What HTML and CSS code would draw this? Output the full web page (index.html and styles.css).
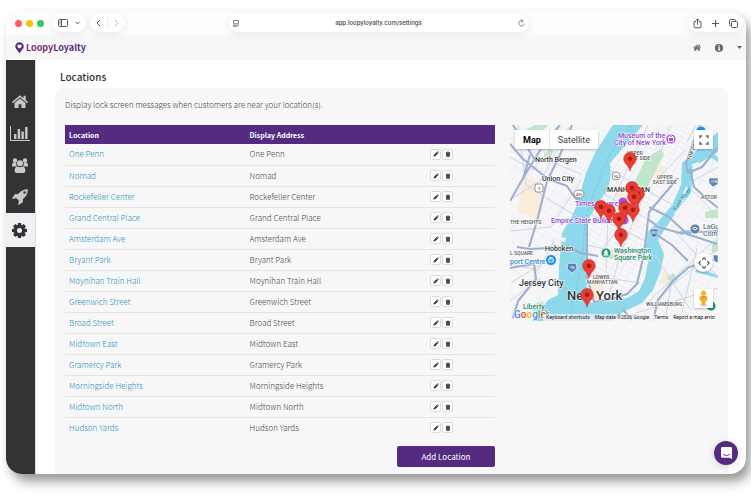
FILE: index.html
```html
<!DOCTYPE html>
<html lang="en">
<head>
<meta charset="utf-8">
<title>Locations</title>
<link rel="stylesheet" href="styles.css">
</head>
<body>
<svg class="sprite" aria-hidden="true">
  <symbol id="home" viewBox="0 0 16 13"><path d="M8 .3 0 7l.9 1.2L8 2.3l7.100 5.900L16 7l-2.300-1.900V.8h-2.200v2.500zM8 3.400 2.500 8v5h4.100V9.300h2.800V13h4.100V8z"/></symbol>
  <symbol id="pencil" viewBox="0 0 8 8"><path d="M1 5.200 5 1.200 6.800 3l-4 4L.8 7.200zM5.500.8l.5-.4q.4-.3.800.1l.8.8q.3.400 0 .8l-.4.500z"/></symbol>
  <symbol id="trash" viewBox="0 0 8 8"><path d="M1 1.400h1.800L3.200.5h1.600l.4.900H7v1H1zM1.500 2.800h5v4q0 .8-.8.800H2.300q-.8 0-.8-.8z"/><path d="M3 3.600v3M4 3.600v3M5 3.600v3" stroke="#999" stroke-width=".4"/></symbol>
  <symbol id="pin" viewBox="0 0 14 20"><path d="M7 .5a6.300 6.300 0 0 1 6.300 6.300c0 4.700-4.900 5.700-6.300 12.200C5.600 12.500.7 11.500.7 6.800A6.300 6.300 0 0 1 7 .5z" fill="#ea3d33" stroke="#c92a22" stroke-width=".6"/><circle cx="7" cy="6.800" r="2.300" fill="#a61c17"/></symbol>
</svg>

<div class="window">
  <div class="toolbar">
    <div class="tools-left">
      <span class="lights"><i class="red"></i><i class="yellow"></i><i class="green"></i></span>
      <span class="pill">
        <button aria-label="Sidebar"><svg width="10" height="8" viewBox="0 0 10 8" class="line"><rect x=".5" y=".5" width="9" height="7" rx="1"/><path d="M3.500.5v7M1.500 2h1M1.500 3.500h1M1.500 5h1"/></svg></button>
        <button aria-label="Tab groups"><svg width="5" height="4" viewBox="0 0 5 4" class="line"><path d="m.5.8 2 2 2-2"/></svg></button>
      </span>
      <span class="pill arrows">
        <button aria-label="Back"><svg width="5" height="8" viewBox="0 0 5 8" class="line"><path d="M4.200.8 1 4l3.200 3.200"/></svg></button>
        <i class="divider"></i>
        <button aria-label="Forward" class="faded"><svg width="5" height="8" viewBox="0 0 5 8" class="line"><path d="M.8.8 4 4 .8 7.200"/></svg></button>
      </span>
    </div>
    <div class="address">
      <svg width="6" height="7" viewBox="0 0 6 7" class="line"><path d="M.5.500h5v3.300h-5zM0 5.200h6M0 6.600h4"/></svg>
      <span>app.loopyloyalty.com/settings</span>
      <button aria-label="Reload"><svg width="7" height="8" viewBox="0 0 7 8" class="line"><path d="M5.200 2.200A2.700 2.700 0 1 0 6.200 4.500M3.200.3l2 1.900-2 1.500"/></svg></button>
    </div>
    <div class="tools-right">
      <span class="pill">
        <button aria-label="Share"><svg width="9" height="11" viewBox="0 0 9 11" class="line"><path d="M3 3.500H1.700Q1 3.500 1 4.300v4.500q0 1 1 1h5q1 0 1-1V4.300q0-.8-.8-.8H6M4.500 6.800V1M2.800 2.600 4.500.9l1.700 1.700"/></svg></button>
        <button aria-label="New tab"><svg width="7" height="7" viewBox="0 0 7 7" class="line"><path d="M3.500 0v7M0 3.500h7"/></svg></button>
        <button aria-label="Tab overview"><svg width="9" height="9" viewBox="0 0 9 9" class="line"><rect x="2.500" y="2.500" width="6" height="6" rx="1"/><path d="M2.500 6.500h-1q-1 0-1-1v-4q0-1 1-1h4q1 0 1 1v1"/></svg></button>
      </span>
    </div>
  </div>

  <header class="header">
    <a class="logo" href="#"><svg width="9" height="12" viewBox="0 0 9 12"><path d="M4.500.3a4.200 4.200 0 0 1 4.200 4.200c0 2.300-1.700 3.200-2.500 4.400L4.500 11.300 2.800 8.900C2 7.700.3 6.800.3 4.500A4.200 4.200 0 0 1 4.500.3z" fill="#542b80"/><path d="M4.500 6.600C2.500 5.300 2.400 4.500 2.400 3.800q.1-1.200 1.200-1.200.6 0 .9.600.3-.6.900-.6 1.100 0 1.200 1.200c0 .7-.1 1.500-2.100 2.800z" fill="#fff"/></svg><span class="loopy">Loopy</span><span>Loyalty</span></a>
    <nav class="header-nav">
      <a href="#" aria-label="Home"><svg width="8" height="7"><use href="#home"/></svg></a>
      <a href="#" aria-label="Information"><svg width="8" height="8" viewBox="0 0 8 8"><circle cx="4" cy="4" r="4"/><path d="M3.300 1.300h1.500v1.100H3.300zM2.900 3.200h2v2.500h.6v.8H2.800v-.8h.6V4h-.5z" fill="#f7f7f7"/></svg></a>
      <a href="#" aria-label="Account menu"><svg width="5" height="3" viewBox="0 0 5 3"><path d="M0 0h5L2.500 3z"/></svg></a>
    </nav>
  </header>

  <div class="body">
    <nav class="sidebar">
      <a href="#" aria-label="Home"><svg width="16" height="13"><use href="#home"/></svg></a>
      <a href="#" aria-label="Statistics"><svg width="20" height="15" viewBox="0 0 20 15"><path d="M0 0h1v14h19v1H0zM4 8h2.400v5H4zM7.700 3h2.400v10H7.700zM11.400 5.500h2.400V13h-2.400zM15.100 1h2.400v12h-2.400z"/></svg></a>
      <a href="#" aria-label="Customers"><svg width="16" height="15" viewBox="0 0 16 15"><circle cx="3" cy="2.500" r="2.200"/><circle cx="13" cy="2.500" r="2.200"/><path d="M0 8.500V7q0-2.400 2-2.400h2.300q-.6 2.200 1 3.900zM16 8.500V7q0-2.400-2-2.400h-2.300q.6 2.200-1 3.900z"/><circle cx="8" cy="5.300" r="3"/><path d="M2.600 13q0-4.300 2.900-4.600 2.500 1.600 5 0 2.900.3 2.900 4.600 0 2-2.200 2H4.800q-2.200 0-2.200-2z"/></svg></a>
      <a href="#" aria-label="Campaigns"><svg width="16" height="16" viewBox="0 0 16 16"><path fill-rule="evenodd" d="M15.800.2q.3 5-3.500 8.500l-1.300 1.200-.2 3.300-4.300 2.700-.4-.4.900-3.500-2.800-2.900L.5 10l-.4-.4 2.700-4.300 3.300-.2L7.300 3.800Q10.800 0 15.800.2zM12.500 2.200a1.300 1.300 0 1 0 .1 2.600 1.300 1.300 0 0 0-.1-2.600z"/></svg></a>
      <a href="#" aria-label="Settings" class="current"><svg width="15" height="15" viewBox="-8 -8 16 16"><g id="teeth"><path d="M-1.700-8h3.400l.6 4h-4.600zM-1.700 8h3.400l.6-4h-4.600zM-8-1.700v3.400l4 .6v-4.600zM8-1.700v3.400l-4 .6v-4.600z"/></g><use href="#teeth" transform="rotate(45)"/><circle r="4.300" fill="none" stroke="#333" stroke-width="3.200"/></svg></a>
    </nav>

    <main class="main">
      <h1>Locations</h1>
      <section class="panel">
        <p class="intro">Display lock screen messages when customers are near your location(s).</p>
        <div class="columns">
          <div class="list">
            <table>
              <thead><tr><th class="name">Location</th><th class="place">Display Address</th><th aria-label="Actions"></th></tr></thead>
              <tbody id="rows"></tbody>
            </table>
            <button class="add">Add Location</button>
          </div>

          <div class="map">
            <svg class="canvas" viewBox="510 125 208 196" role="img" aria-label="Map of New York locations">
              <defs>
                <pattern id="streets" width="9" height="5" patternUnits="userSpaceOnUse" patternTransform="rotate(28)"><path d="M0 0h9M0 0v5" stroke="#dee1e9" stroke-width=".8" fill="none"/></pattern>
                <pattern id="blocks" width="15" height="11" patternUnits="userSpaceOnUse" patternTransform="rotate(32)"><path d="M0 0h15M0 0v11" stroke="#dfe3eb" stroke-width=".8" fill="none"/></pattern>
              </defs>
              <rect x="510" y="125" width="208" height="196" fill="#f6f6f8"/>
              <rect x="510" y="125" width="208" height="196" fill="url(#blocks)"/>
              <path d="M643 125 610 163 608 190 588 220 586 300 610 309 640 290 650 235 690 180 692 155 715 125z" fill="#f7f7f9"/>
              <path d="M643 125 610 163 608 190 588 220 586 300 610 309 640 290 650 235 690 180 692 155 715 125z" fill="url(#streets)"/>
              <g fill="#f8edda"><path d="M522 175l17 8 4 22-8 14-17-8z"/><path d="M593 272l13 4-5 23-12 2z"/><path d="M615 195l15-12 14 10-16 18z"/><path d="M657 163l8 4-6 13-8-4zM663 272l12 6-6 8-10-4z"/></g>
              <g fill="#bfe8cb"><path d="M526 129l10-4h12l-12 13zM544 156l5-8 5 3-5 9zM560 134l9-5 5 4-8 7z"/><path d="M646 158l15-9 3 6-20 38-12-6z"/><path d="M666 278l7-5 5 6-4 5zM705 212l13-3v9h-13zM530 306l12-5 5 8-11 6z"/><path d="M712 244l6-5v12l-6 2zM607 256l5-4 3 5-4 3z"/></g>
              <g fill="#8ed8ec">
                <path d="M613 125h30l-33 38q2 15-3 28l-10 13-9 17-1 22-2 23 2 20 4 17 22-2 14-3 12-7 6-13 4-21-4-14 2-11 10-9 15-18 9-20 1-22 9-8 27-23v20l-18 11-7 10-2 20-14 18-14 21-5 8 6 14-3 16-8 20-11 13-19 9-12 9h-79l16-21 10-5 1-28 3-34 8-13 7-15 9-32 9-20z"/>
                <path d="M697 268l21 7v3l-23-6zM680 231l17-2-2 4-15 2zM705 147l13 10v5l-15-9z"/>
              </g>
              <path d="M675 214l10-17M684 194l3-7M693 165l5-2 2 5-5 4z" fill="#f4f4f6" stroke="#f4f4f6" stroke-width="2"/>
              <g fill="#f4f4f6"><path d="M549 235l17 3-1 4-16-2zM546 249l14 2v4l-15-1zM544 267l14 1v5l-14-1z"/></g>
              <g fill="none" stroke="#cdd4e3" stroke-width="1"><path d="M510 157l23 13 31-38M518 125l8 60 50 31M510 200l31-20 28-53M510 231l41-4 31-48M512 282l46-28M510 264l28 6 17-31M510 301l31-23M535 125l12 35 34 14M648 125l-19 40-21 47-2 61M671 125l-31 80-20 50-12 45M685 150l-49 52-31 45M610 170l67 37M602 193l65 37M592 215l58 28M588 245l57 14M587 275l53 8M718 167l-29 16M675 232l43 45M648 302l70-65M665 321l6-35 44-35M636 313l82-25M655 255l35 54M697 248l-17 73M692 190l26 27M696 125l-9 17"/></g>
              <g fill="none" stroke="#9fafd0" stroke-width="2.100" stroke-linejoin="round"><path d="M510 144l13 15 25 20 19 7 8 12 32 15M510 201l16-28 18-29 16-19M535 160l-22-35M523 179l7-24M517 247l13 2 38-2 13 6 17 3"/><path d="M513 318l5-17 18-22-2-15-24 4M572 125l-12 30-13 26-10 40-8 26"/><path d="M700 125l-8 21-6 17 2 10 14-6 16-20M690 169l4 18 12 11 12 10M649 207l20 10 18 17 30 10M648 219l10 8 22 6 38-2M587 220v57l7 25 18-3 15-5 10-10 7-30 5-42 29-34"/><path d="M653 321l5-21 15-19 16-14 18-5 11-3M654 233l18 12 16 16M632 321l-9-12"/></g>
              <path d="M632 125l-23 31-14 34-10 30-3 43-12 53" fill="none" stroke="#5fc2df" stroke-width=".7" stroke-dasharray="3 2"/>
              <g class="shield"><ellipse cx="579" cy="194" rx="5" ry="4"/><circle cx="616" cy="176" r="4"/><rect x="535" y="184" width="8" height="8" rx="2"/></g>
              <g class="route"><text x="579" y="196">495</text><text x="616" y="178">9A</text><text x="539" y="190">9</text></g>
              <g fill="#5d7fb9" stroke="#fff" stroke-width=".6"><path d="M568 263q4 1 8 0l1 6-5 4-5-4zM650 229h8v5l-4 4-4-4zM709 178h9v6l-5 3-4-4zM713 255h5v8l-4-2z"/></g>
              <g class="route light"><text x="572" y="269">78</text><text x="654" y="234">495</text><text x="714" y="183">278</text></g>
              <g class="city"><text x="535" y="162">North Bergen</text><text x="542" y="181">Union City</text><text x="545" y="251">Hoboken</text><text x="607" y="192">MANHATTAN</text><text x="519" y="286" class="large">Jersey City</text><text x="567" y="300" class="huge">New York</text></g>
              <g class="area"><text x="510" y="224">THE HEIGHTS</text><text x="510" y="255">L SQUARE</text><text x="627" y="155">UPPER</text><text x="625" y="160">WEST SIDE</text><text x="657" y="179">UPPER</text><text x="653" y="184">EAST SIDE</text><text x="701" y="199">ASTOR</text><text x="593" y="279">LOWER</text><text x="587" y="284">MANHATTAN</text><text x="646" y="306">WILLIAMSBURG</text></g>
              <g class="poi violet"><text x="618" y="138">Museum of the</text><text x="614" y="145">City of New York</text><text x="575" y="206">Times Square</text><text x="551" y="223">Empire State Building</text></g>
              <g class="poi green"><text x="614" y="253">Washington</text><text x="614" y="260">Square Park</text><text x="523" y="309">Liberty</text><text x="543" y="316">rk</text></g>
              <g class="poi slate"><text x="703" y="229">LaGu</text><text x="703" y="236">Com</text></g>
              <text x="510" y="264" class="poi blue">port Centre</text>
              <text x="0" y="0" class="river" transform="translate(676 211) rotate(-55)">East River</text>
              <text x="0" y="0" class="area" transform="translate(690 160) rotate(-66)">FDR DR</text>
              <g stroke="#fff" stroke-width=".8"><circle cx="671" cy="139" r="5" fill="#a653dc"/><circle cx="623" cy="202" r="5" fill="#a653dc"/><circle cx="624" cy="220" r="5" fill="#a653dc"/><circle cx="551" cy="260" r="5.500" fill="#1b8fe8"/><circle cx="606" cy="253" r="5" fill="#159b70"/><circle cx="695" cy="229" r="5" fill="#67819b"/><circle cx="711" cy="306" r="5" fill="#159b70"/><circle cx="701" cy="131" r="5" fill="#1b8fe8"/></g>
              <path d="M668 137.500 671 135.500l3 2zM668.500 138v3.500h5V138M548.800 259h4.400v3h-4.400zM549.800 259v-1.500h2.400v1.500M692.500 228.500l2.500-1.500 2.500 1.500-2.500 1.500z" fill="none" stroke="#fff" stroke-width=".9"/>
              <path d="M606 249.500l2.500 3.500h-1.500l2 2.500h-6l2-2.500h-1.500zM605.600 255.500h.8v1.500h-.8z" fill="#fff"/>
              <g><use href="#pin" x="623" y="152" width="14" height="20"/><use href="#pin" x="625" y="181" width="14" height="20"/><use href="#pin" x="631" y="187" width="14" height="20"/><use href="#pin" x="627" y="190" width="14" height="20"/><use href="#pin" x="594" y="200" width="14" height="20"/><use href="#pin" x="602" y="204" width="14" height="20"/><use href="#pin" x="618" y="201" width="14" height="20"/><use href="#pin" x="626" y="203" width="14" height="20"/><use href="#pin" x="612" y="212" width="14" height="20"/><use href="#pin" x="614" y="228" width="14" height="20"/><use href="#pin" x="582" y="259" width="14" height="20"/><use href="#pin" x="580" y="288" width="14" height="20"/></g>
              <text x="514" y="318" class="brand"><tspan fill="#4285f4">G</tspan><tspan fill="#ea4335">o</tspan><tspan fill="#f5b400">o</tspan><tspan fill="#4285f4">g</tspan><tspan fill="#34a853">l</tspan><tspan fill="#ea4335">e</tspan></text>
            </svg>
            <div class="map-type"><button class="active">Map</button><button>Satellite</button></div>
            <button class="control fullscreen" aria-label="Full screen"><svg width="10" height="10" viewBox="0 0 10 10"><path d="M1 3.200V1h2.200M6.800 1H9v2.200M9 6.800V9H6.800M3.200 9H1V6.800" fill="none" stroke="#666" stroke-width="1.500"/></svg></button>
            <button class="control pan" aria-label="Map camera controls"><svg width="12" height="12" viewBox="0 0 12 12"><path d="M4 2.800 6 .8l2 2M4 9.200l2 2 2-2M2.800 4l-2 2 2 2M9.200 4l2 2-2 2" fill="none" stroke="#666" stroke-width="1.300"/></svg></button>
            <button class="control person" aria-label="Street View"><svg width="9" height="17" viewBox="0 0 9 17"><ellipse cx="4.500" cy="15" rx="4" ry="1.500" fill="#ddd"/><path d="M2 6h5q1.500 0 1.500 2l-.5 3H6.700L6 15.500H3L2.300 11H1L.5 8Q.5 6 2 6z" fill="#f5b02a"/><circle cx="4.500" cy="3.200" r="2.700" fill="#f7b733"/><path d="M2.500 6.500h4L4.500 8.500z" fill="#d18317"/></svg></button>
            <div class="credits"><button>Keyboard shortcuts</button><span>Map data ©2026 Google</span><a href="#">Terms</a><a href="#">Report a map error</a></div>
          </div>
        </div>
      </section>
    </main>
  </div>
  <button class="chat" aria-label="Open chat"><svg width="11" height="12" viewBox="0 0 11 12"><path d="M1.300 0h8.400Q11 0 11 1.300V12L8.500 10.800H1.300Q0 10.800 0 9.500V1.300Q0 0 1.300 0z" fill="#fff"/><path d="M2 7.400q3.500 2.600 7 0" fill="none" stroke="#542b80" stroke-width=".9"/></svg></button>
</div>
<script src="script.js"></script>
</body>
</html>
```
FILE: styles.css
```css
* { box-sizing: border-box; }

body {
  margin: 0;
  padding: 11px 5px 27px 6px;
  background: #fff;
  color: #444;
  font-family: "Noto Sans CJK SC", "Noto Sans", sans-serif;
  font-size: 8px;
  line-height: 12px;
}

button {
  margin: 0;
  padding: 0;
  border: 0;
  background: none;
  color: inherit;
  font: inherit;
}

a { color: inherit; text-decoration: none; }
svg { display: block; fill: currentColor; }
.sprite { position: absolute; width: 0; height: 0; }
.line { fill: none; stroke: currentColor; stroke-width: 1; }

.window {
  position: relative;
  overflow: hidden;
  border-radius: 16px;
  background: #fff;
  box-shadow: 5px 8px 12px -1px rgba(0, 0, 0, .42), 0 0 8px rgba(0, 0, 0, .03);
}

/* Browser toolbar */
.toolbar {
  display: grid;
  grid-template-columns: 1fr 300px 1fr;
  align-items: center;
  height: 24px;
  padding: 0 3px 0 9px;
  background: #fdfdfd;
  color: #555;
}
.tools-left { display: flex; align-items: center; gap: 4px; }
.tools-right { display: flex; justify-content: flex-end; }
.lights { display: flex; gap: 4px; margin-right: 4px; }
.lights i { width: 7px; height: 7px; border-radius: 50%; }
.red { background: #ff5a5f; }
.yellow { background: #fcc100; }
.green { background: #30c75c; }
.pill {
  position: relative;
  z-index: 1;
  display: flex;
  align-items: center;
  gap: 7px;
  height: 18px;
  padding: 0 6px;
  border-radius: 9px;
  background: #fff;
  box-shadow: 0 2px 9px rgba(0, 0, 0, .09);
}
.arrows { gap: 6px; padding: 0 6px; }
.divider { width: 1px; height: 10px; background: #eee; }
.tools-right .pill { gap: 10px; padding: 0 5px; }
.faded { color: #bbb; }
.address {
  position: relative;
  z-index: 1;
  display: flex;
  align-items: center;
  justify-content: space-between;
  height: 18px;
  padding: 0 4px;
  border-radius: 9px;
  background: #fff;
  box-shadow: 0 2px 9px rgba(0, 0, 0, .09);
  color: #888;
  font-family: Inter, sans-serif;
  font-size: 6px;
  font-weight: 500;
}
.address span { color: #444; }

/* Application header */
.header {
  display: flex;
  align-items: center;
  justify-content: space-between;
  height: 25px;
  padding: 0 4px 0 9px;
  background: #f7f7f7;
  color: #666;
}
.logo {
  display: flex;
  align-items: center;
  color: #542b80;
  font-family: "Noto Sans", sans-serif;
  font-size: 9px;
  font-weight: 700;
}
.logo { font-family: "Noto Sans CJK SC", sans-serif; }
.logo svg { margin-right: 2px; }
.loopy { color: #7b2b70; }
.header-nav { display: flex; align-items: center; gap: 14px; }

.body { display: flex; }
.sidebar {
  flex: none;
  width: 30px;
  padding-top: 25px;
  border-right: 1px solid #ddd;
  background: #333;
  color: #c9c9cd;
}
.sidebar a {
  display: flex;
  align-items: center;
  justify-content: center;
  height: 32px;
  padding-right: 2px;
}
.sidebar .current { height: 34px; background: #f0eff4; color: #333; }

.main { flex: 1; min-width: 0; padding: 0 18px 0 19px; }
h1 {
  margin: 0;
  padding: 9px 5px 3px;
  color: #333;
  font-size: 10px;
  font-weight: 500;
  line-height: 16px;
}
.panel { padding: 11px 10px 7px; border-radius: 7px 7px 0 0; background: #f7f7f7; }
.intro { margin: 0 0 14px; font-weight: 300; }
.columns { display: grid; grid-template-columns: 430fr 208fr; gap: 15px; align-items: start; }
.list { display: flex; flex-direction: column; }

table { width: 100%; border-collapse: collapse; table-layout: fixed; }
th, td { padding: 0 4px; text-align: left; }
th { height: 19px; background: #542b80; color: #fff; font-size: 7px; font-weight: 700; }
td { height: 21px; border-bottom: 1px solid #e5e5e5; font-weight: 300; }
tr:last-child td { border-bottom: 0; }
.name, .place { width: 42%; }
td a { color: #2b8fbb; }
.actions { display: flex; gap: 1px; }
.actions button {
  display: grid;
  place-items: center;
  width: 11px;
  height: 11px;
  border: 1px solid #ddd;
  border-radius: 2px;
  background: #fff;
  color: #333;
}
.add {
  align-self: flex-end;
  width: 98px;
  height: 21px;
  margin-top: 8px;
  border-radius: 2px;
  background: #542b80;
  color: #fff;
}

/* Map */
.map { position: relative; font-family: Roboto, sans-serif; }
.canvas { width: 100%; height: auto; }
.city { fill: #333; font-size: 7px; font-weight: 500; stroke: #fff; stroke-width: 1px; paint-order: stroke; }
.city .large { font-size: 9px; }
.city .huge { font-size: 13px; }
.area { fill: #555; font-size: 5px; font-weight: 500; stroke: #fff; stroke-width: 1px; paint-order: stroke; }
.poi { font-size: 7px; font-weight: 500; stroke: #fff; stroke-width: 1px; paint-order: stroke; }
.violet { fill: #9045d6; }
.green.poi { background: none; fill: #258765; }
.slate { fill: #5f7890; }
.blue { fill: #3684d6; }
.river { fill: #278cad; font-size: 6px; }
.shield { fill: #fff; stroke: #777; stroke-width: .8; }
.route { fill: #444; font-size: 4px; text-anchor: middle; }
.light { fill: #fff; }
.brand { font-size: 10px; font-weight: 500; stroke: #fff; stroke-width: 1px; paint-order: stroke; }
.map-type {
  position: absolute;
  top: 5px;
  left: 5px;
  display: flex;
  height: 19px;
  background: #fff;
  box-shadow: 0 1px 2px rgba(0, 0, 0, .25);
  font-size: 9px;
}
.map-type button { padding: 0 8px; }
.map-type .active { border-right: 1px solid #e5e5e5; color: #000; font-weight: 700; }
.control {
  position: absolute;
  right: 5px;
  display: grid;
  place-items: center;
  width: 19px;
  height: 19px;
  background: #fff;
  box-shadow: 0 1px 2px rgba(0, 0, 0, .25);
}
.fullscreen { top: 5px; }
.pan { bottom: 49px; border-radius: 50%; }
.person { bottom: 13px; }
.credits {
  position: absolute;
  right: 0;
  bottom: 0;
  display: flex;
  gap: 5px;
  padding: 0 3px;
  background: rgba(245, 245, 245, .75);
  color: #111;
  font-size: 5px;
  line-height: 7px;
  white-space: nowrap;
}

.chat {
  position: absolute;
  right: 8px;
  bottom: 9px;
  display: grid;
  place-items: center;
  width: 24px;
  height: 24px;
  border-radius: 50%;
  background: #542b80;
  box-shadow: 0 1px 8px rgba(0, 0, 0, .15);
}
```
FILE: script.js
```js
const places = [
  "One Penn", "Nomad", "Rockefeller Center", "Grand Central Place",
  "Amsterdam Ave", "Bryant Park", "Moynihan Train Hall", "Greenwich Street",
  "Broad Street", "Midtown East", "Gramercy Park", "Morningside Heights",
  "Midtown North", "Hudson Yards"
];

document.getElementById("rows").innerHTML = places.map(place => `
  <tr>
    <td><a href="#">${place}</a></td>
    <td>${place}</td>
    <td><div class="actions">
      <button aria-label="Edit ${place}"><svg width="6" height="6"><use href="#pencil"/></svg></button>
      <button aria-label="Delete ${place}"><svg width="6" height="6"><use href="#trash"/></svg></button>
    </div></td>
  </tr>`).join("");
```
